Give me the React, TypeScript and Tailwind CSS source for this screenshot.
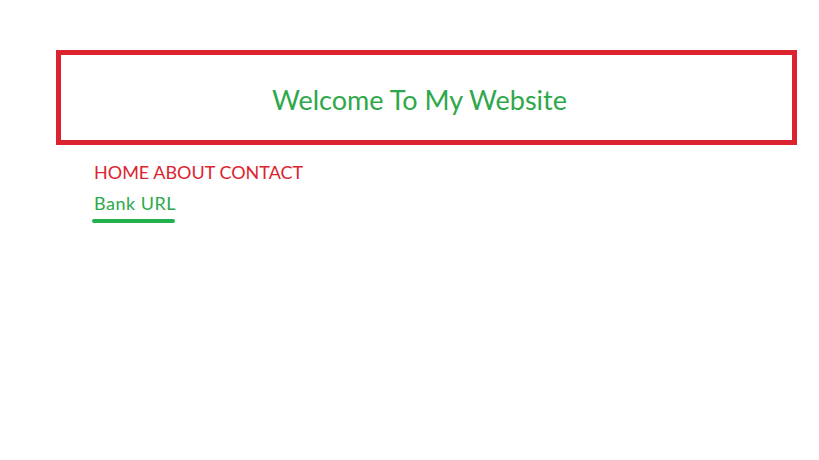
export default function App() {
  return (
    <div className="min-h-[460px] w-[819px] bg-white pt-[50px] font-['Lato','Liberation_Sans',sans-serif]">
      <div className="ml-[56px] flex h-[95px] w-[741px] items-center justify-center border-[5px] border-[#dc2430] pt-[3px] pr-[14px]">
        <h1 className="text-[27px] leading-none text-[#2ea84a]">Welcome To My Website</h1>
      </div>
      <div className="ml-[94px] mt-[16px] flex flex-col items-start">
        <div className="text-[18px] leading-[22px] text-[#dc2430]">HOME ABOUT CONTACT</div>
        <a className="mt-[9px] text-[18px] leading-[22px] tracking-[0.5px] text-[#2ea84a]">Bank URL</a>
        <div className="-ml-[2px] mt-[5px] h-[4px] w-[83px] rounded-full bg-[#22b14c]" />
      </div>
    </div>
  );
}
